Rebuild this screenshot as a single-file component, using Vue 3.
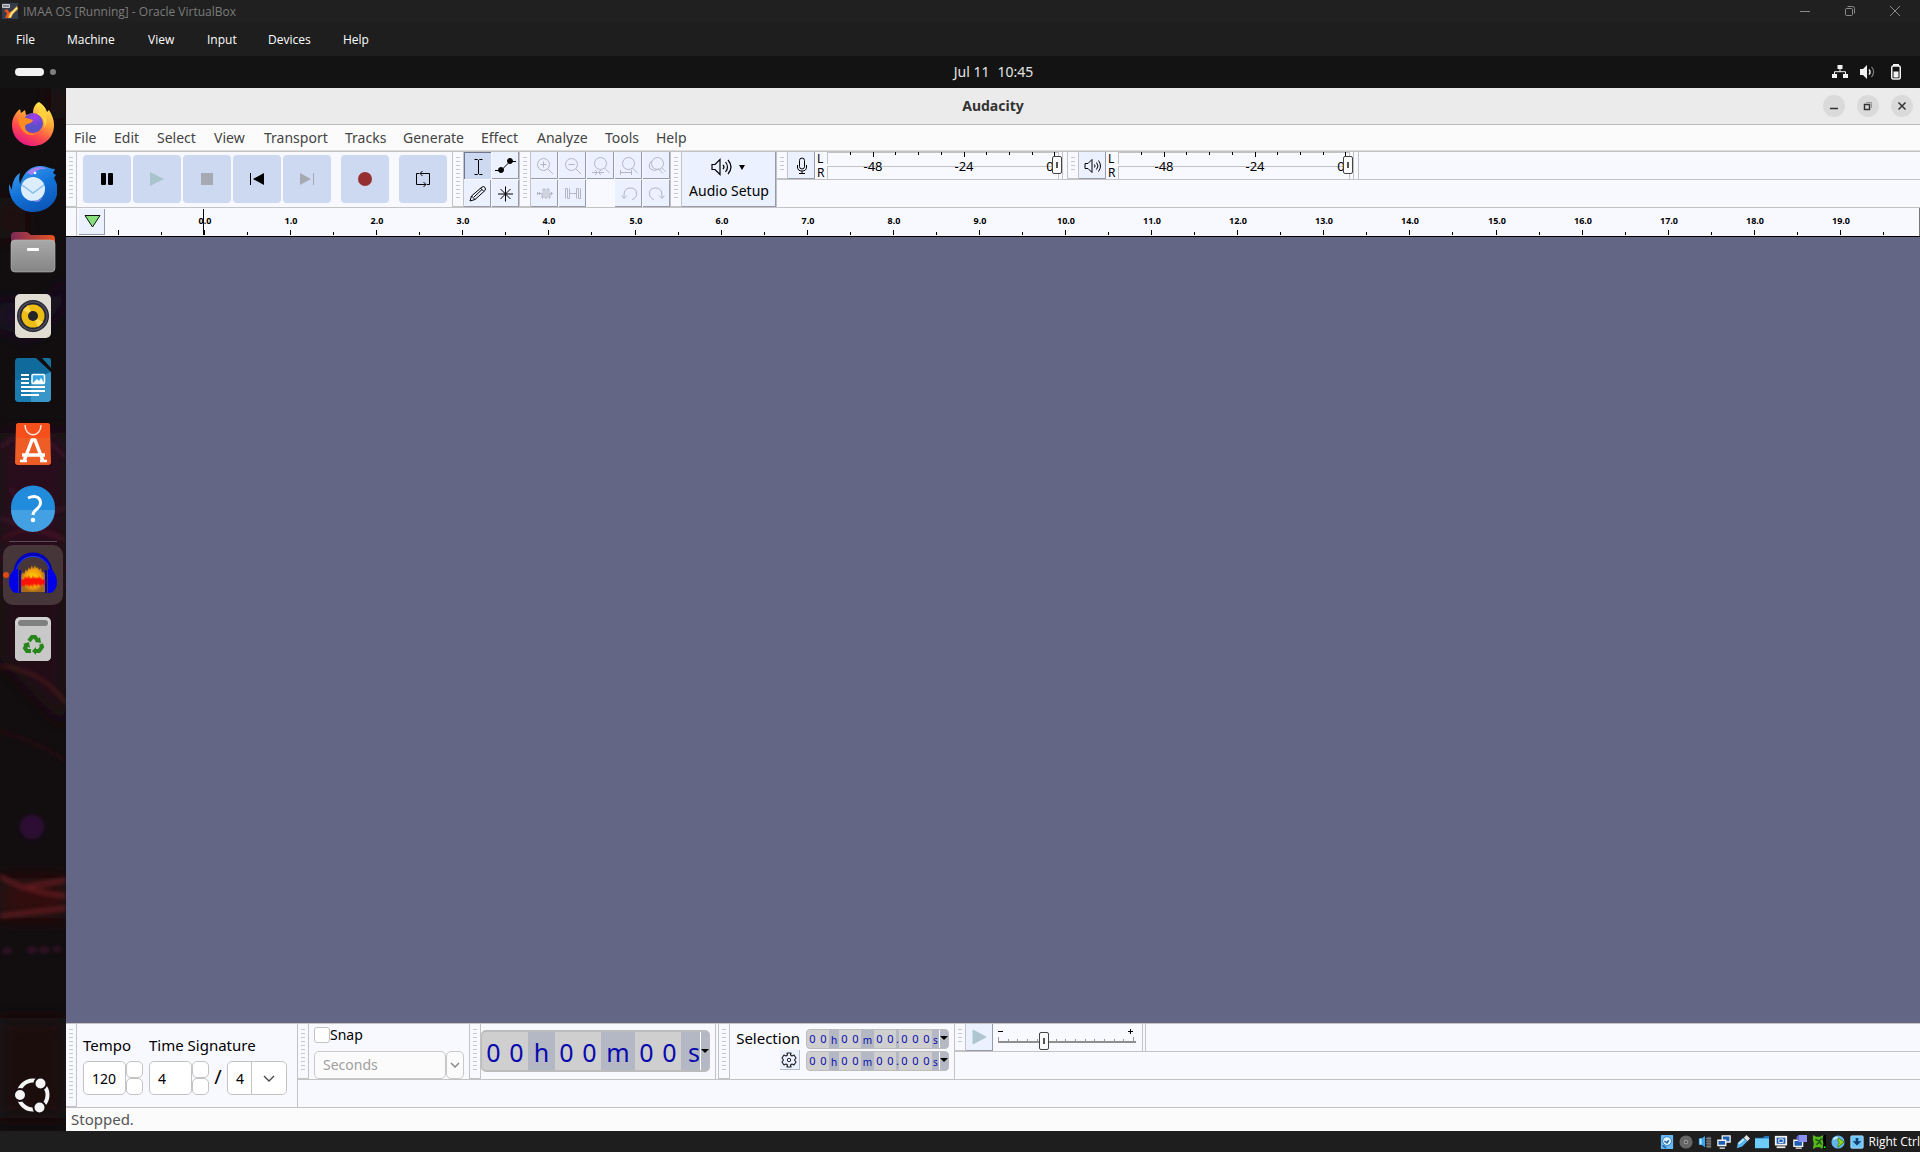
<script setup>
const vmMenu = ['File', 'Machine', 'View', 'Input', 'Devices', 'Help']
const appMenu = ['File', 'Edit', 'Select', 'View', 'Transport', 'Tracks', 'Generate', 'Effect', 'Analyze', 'Tools', 'Help']

const pitch = 86.1
const zero = 99
const ticks = []
for (let i = -2; i <= 39; i++) {
  ticks.push({ x: Math.round(zero + (i * pitch) / 2), major: i % 2 === 0, label: i >= 0 && i % 2 === 0 ? (i / 2).toFixed(1) : '' })
}

const meterTicks = Array.from({ length: 10 }, (_, i) => ({ x: Math.round(24 + i * 22.7), long: i % 4 === 1 || i === 9 }))
const meters = ['Recording level', 'Playback level']

const bigTime = [['00', 'n'], ['h', 'u'], ['00', 'n'], ['m', 'w'], ['00', 'n'], ['s', 'e']]
const smallTime = [['00', 'n'], ['h', 'u'], ['00', 'n'], ['m', 'w'], ['00', 'n'], ['.', 'd'], ['000', 'n'], ['s', 'e']]
const speedTicks = Array.from({ length: 15 }, (_, i) => Math.round(1 + i * 9.64))
</script>

<template>
  <div class="screen">
    <header class="vm-title">
      <svg class="vm-logo" width="16" height="16" viewBox="0 0 16 16"><rect width="16" height="16" fill="#343b4c" /><path d="M2 8 5 6l3 4-2 5H3l2-5z" fill="#e8501e" /><path d="M6 15c1-5 2-6 5-8l4-4 1 3-5 5-2 4z" fill="#f7a92b" /><path d="M8 14c1-4 3-5 7-9" stroke="#ffe9a0" stroke-width="1.5" fill="none" /><rect x="0" y="1" width="8" height="4" rx="1" fill="#c9ccd0" /><path d="M1 3h2m1-1v2m2-2v2" stroke="#444" /></svg>
      <span>IMAA OS [Running] - Oracle VirtualBox</span>
      <div class="vm-controls">
        <button aria-label="Minimize"><svg width="12" height="12" viewBox="0 0 12 12"><path d="M1 6.500h10" /></svg></button>
        <button aria-label="Restore"><svg width="12" height="12" viewBox="0 0 12 12"><rect x="1.500" y="3.500" width="7" height="7" rx="1" /><path d="M3.500 1.500h5a2 2 0 0 1 2 2v5" /></svg></button>
        <button aria-label="Close"><svg width="12" height="12" viewBox="0 0 12 12"><path d="m1 1 10 10M11 1 1 11" /></svg></button>
      </div>
    </header>
    <nav class="vm-menu"><a v-for="m in vmMenu" :key="m" href="#">{{ m }}</a></nav>

    <div class="topbar">
      <div class="workspaces"><i class="pill"></i><i class="dot"></i></div>
      <div class="clock"><span>Jul 11</span><span>10:45</span></div>
      <div class="tray">
        <svg width="16" height="16" viewBox="0 0 16 16"><path d="M5.500 1h5v4h-5zM0 10h5v4H0zM11 10h5v4h-5z" fill="#f2f2f2" /><path d="M8 5v3M2.500 10V7.700h11V10" stroke="#f2f2f2" fill="none" /></svg>
        <svg width="16" height="16" viewBox="0 0 16 16"><path d="M0 5h3l4-4v14l-4-4H0z" fill="#f2f2f2" /><path d="M9 5.500a3.500 3.500 0 0 1 0 5" stroke="#f2f2f2" stroke-width="1.500" fill="none" /><path d="M11.500 3a7 7 0 0 1 0 10" stroke="#777" stroke-width="1.300" fill="none" /></svg>
        <svg width="16" height="16" viewBox="0 0 16 16"><rect x="3.750" y="2" width="8.500" height="13" rx="1.500" stroke="#f2f2f2" stroke-width="1.500" fill="none" /><path d="M5 0h6v2H5zM5.500 7.500h5v6h-5z" fill="#f2f2f2" /></svg>
      </div>
    </div>

    <div class="desktop">
      <aside class="dock">
        <svg class="wall" viewBox="0 0 66 1043" preserveAspectRatio="none">
          <defs>
            <filter id="soft" x="-50%" y="-50%" width="200%" height="200%"><feGaussianBlur stdDeviation="2" /></filter>
            <filter id="haze" x="-50%" y="-50%" width="200%" height="200%"><feGaussianBlur stdDeviation="9" /></filter>
          </defs>
          <rect width="66" height="1043" fill="#120e10" />
          <g filter="url(#haze)">
            <path d="M0 110h25v40H0zM50 0h16v30H50z" fill="#200d11" />
            <path d="M0 210 40 225 66 190v25L30 250 0 240z" fill="#1e0f2a" />
            <path d="M0 345h66v165H0z" fill="#2b0c1a" />
            <path d="M0 500h66v140L0 570z" fill="#220d12" />
            <path d="M0 790h66v40H0z" fill="#32100f" />
            <path d="M0 930h66v100H0z" fill="#1c0d10" />
          </g>
          <g filter="url(#soft)" fill="none" stroke-width="2" opacity=".75">
            <path d="M0 360q30-30 66 10M10 400q20 30 56 20M0 430 66 452" stroke="#551b3a" />
            <path d="M0 452q30-20 66 0M0 470q40 25 66 8M0 495q40-12 66 5" stroke="#5b1723" />
            <path d="M0 578q45 5 66 38" stroke="#71261f" />
            <path d="M0 643q40 12 66 30" stroke="#3a1217" />
            <path d="M0 788q25 16 66 20M20 800l46-8M0 828l66-8" stroke="#6b1f22" stroke-width="5" />
            <path d="M3 863h8M28 862h8M40 862h8M54 861h6" stroke="#4d1838" stroke-width="5" />
          </g>
          <circle cx="32" cy="739" r="12" fill="#2f1034" filter="url(#soft)" />
        </svg>
        <button class="slot" aria-label="Firefox"><svg width="48" height="48" viewBox="0 0 48 48">
          <defs><linearGradient id="ff" x1=".8" y1="0" x2=".3" y2="1"><stop offset="0" stop-color="#fff44f" /><stop offset=".4" stop-color="#ffa436" /><stop offset=".7" stop-color="#ff4a4c" /><stop offset="1" stop-color="#e31587" /></linearGradient><radialGradient id="fp" cx=".6" cy=".2"><stop offset="0" stop-color="#a93cf0" /><stop offset="1" stop-color="#5b50c8" /></radialGradient></defs>
          <path d="M30 2c5 3 7 7 8 10l2-2c3 5 5 9 5 15 0 12-9 21-21 21S3 37 3 25c0-6 3-12 8-16l1 4 4-3 1 5 7-2c0-5 2-9 6-11z" fill="url(#ff)" />
          <circle cx="24" cy="23" r="10" fill="url(#fp)" /><path d="M9 18c5-2 9 0 15 2-1 4-6 3-8 6 0 7 7 9 13 7-10 6-19-2-20-15z" fill="#ff8b22" /><path d="M28 14c5 2 9 8 7 14 5-6 3-16-3-20z" fill="#ffd23d" />
        </svg></button>
        <button class="slot" aria-label="Thunderbird"><svg width="48" height="48" viewBox="0 0 48 48">
          <defs><linearGradient id="tb" x1=".2" y1="0" x2=".7" y2="1"><stop offset="0" stop-color="#3d9df0" /><stop offset=".5" stop-color="#1373d9" /><stop offset="1" stop-color="#0b55b5" /></linearGradient></defs>
          <path d="M11 9c-1 4-1 7 0 11C15 7 23 1 33 2c5 0 7 3 13 3l-2 4 3 2-2 3c10 16-2 34-20 34C11 48-1 37 0 20l3 6C3 18 6 12 11 9z" fill="url(#tb)" />
          <path d="M18 9c5-6 14-8 20-4-8-1-12 3-15 6z" fill="#a77ff0" /><circle cx="24" cy="25" r="12" fill="#dceefe" /><path d="m13 21 11 8 11-8" stroke="#8bbce8" stroke-width="1.500" fill="none" /><circle cx="26" cy="9" r="1.300" fill="#fff" /><path d="M22 36c6 2 9 0 12-3-3 5-6 6-12 3z" fill="#9b90f0" />
        </svg></button>
        <button class="slot" aria-label="Files"><svg width="48" height="48" viewBox="0 0 48 48">
          <defs><linearGradient id="fo"><stop offset="0" stop-color="#7d2a58" /><stop offset="1" stop-color="#e9541f" /></linearGradient><linearGradient id="fg" x2="0" y2="1"><stop offset="0" stop-color="#a9a9a9" /><stop offset="1" stop-color="#858585" /></linearGradient></defs>
          <path d="M2 8q0-4 4-4h12l4 3h20q4 0 4 4v14H2z" fill="url(#fo)" /><rect x="2" y="12" width="44" height="32" rx="4" fill="url(#fg)" stroke="#b8b8b8" stroke-width=".6" /><rect x="18" y="20" width="12" height="3" rx="1" fill="#fff" />
        </svg></button>
        <button class="slot" aria-label="Rhythmbox"><svg width="48" height="48" viewBox="0 0 48 48">
          <rect x="6" y="2" width="36" height="44" rx="5" fill="#e2ddd2" /><circle cx="24" cy="24" r="16" fill="#25252f" /><circle cx="24" cy="24" r="14" fill="none" stroke="#4b4c5c" stroke-width="1.500" /><circle cx="24" cy="24" r="11.500" fill="#edbd16" /><path d="m24 24-10-6 5-5zM24 24l10 6-5 5z" fill="#ffd84d" /><circle cx="24" cy="24" r="5" fill="#25252a" />
        </svg></button>
        <button class="slot" aria-label="LibreOffice Writer"><svg width="48" height="48" viewBox="0 0 48 48">
          <path d="M9 2h18l15 14v26q0 4-4 4H10q-4 0-4-4V6q0-4 3-4z" fill="#116a9c" /><path d="m42 16-20 8v22h16q4 0 4-4z" fill="#3996c8" /><path d="M6 24h16v22H10q-4 0-4-4z" fill="#1b7caf" /><path d="M33 2h7q2 0 2 2v8z" fill="#16719f" /><path d="M12 19h8M12 23h8M12 27h8M12 31h24M12 35h24M12 39h18" stroke="#fff" stroke-width="2" /><rect x="23" y="18.500" width="12.500" height="9" rx="1" fill="#38a6e2" stroke="#fff" stroke-width="1.500" /><path d="m24 27 4-4 2 2 2-3 3 5z" fill="#fff" />
        </svg></button>
        <button class="slot" aria-label="App Center"><svg width="48" height="48" viewBox="0 0 48 48">
          <path d="M10 3h28q3 0 3 3l1 36q0 3-3 3H9q-3 0-3-3L7 6q0-3 3-3z" fill="#ee5d25" /><path d="M10 3h28q3 0 3 3v12H7V6q0-3 3-3z" fill="#f5501c" /><path d="M16 5c0 13 16 13 16 0" stroke="#ffe5da" stroke-width="1.500" fill="none" /><path d="m15 41 8-21h3l8 21M13 35h23" stroke="#fff" stroke-width="3.500" fill="none" stroke-linejoin="round" /><path d="M11 41h7M31 41h7" stroke="#fff" stroke-width="2.500" />
        </svg></button>
        <button class="slot" aria-label="Help"><svg width="48" height="48" viewBox="0 0 48 48">
          <circle cx="24" cy="23.500" r="22" fill="#218bdc" /><path d="M2 26h44a22 22 0 0 1-44 0z" fill="#43a0e3" /><path d="M19 14c9-4 14 1 12 7-1 4-7 5-7 10" stroke="#fff" stroke-width="3" fill="none" /><circle cx="24" cy="36" r="2.300" fill="#fff" />
        </svg></button>
        <hr />
        <button class="slot active" aria-label="Audacity"><svg width="48" height="48" viewBox="0 0 48 48">
          <defs><radialGradient id="au"><stop offset="0" stop-color="#ffdf00" /><stop offset=".7" stop-color="#f09a10" /><stop offset="1" stop-color="#a86a18" /></radialGradient></defs>
          <path d="M12 41V24l2-3 1 2 2-5 1 3 2-5 1 3 2-5 1 4 2-4 1 3 2-1 1 3 2-2 1 4 2 0 1 3V41z" fill="url(#au)" /><path d="M12 29l2-1 1 1 1-4 1 3 1-3 1 3 1-4 1 4 1-2 1 2 1-4 1 4 1-3 1 3 1-2 1 2 1-3 1 3 1-2 1 3 2-1 1 1V33l-1 1-2-1-1 3-1-3-1 2-1-3-1 4-1-3-1 2-1-3-1 5-1-4-1 3-1-3-1 4-1-4-1 3-1-3-2 3-1-2-2 2z" fill="#fb1208" /><path d="M6 25C5-4 43-4 42 25" stroke="#0000bd" stroke-width="3.500" fill="none" /><path d="M7 22C8 0 40 0 41 22" stroke="#1c3aff" fill="none" /><path d="M8 18c-4 0-8 6-8 13 0 6 3 11 8 11h1V18zM40 18c4 0 8 6 8 13 0 6-3 11-8 11h-1V18z" fill="#0000e8" /><path d="M11 19v23M37 19v23" stroke="#0000bd" stroke-width="2" />
        </svg></button>
        <button class="slot" aria-label="Trash"><svg width="48" height="48" viewBox="0 0 48 48">
          <rect x="6" y="2" width="36" height="44" rx="5" fill="#d2d2d2" /><path d="M6 10h36v31q0 5-5 5H11q-5 0-5-5z" fill="#c8c8c8" /><rect x="9" y="5" width="30" height="6" rx="3" fill="#808080" />
          <g fill="none" stroke="#27851c" stroke-width="4"><path d="m20 26 3-4h3l3 4" /><path d="m32 29 1 3-3 4h-4" /><path d="M22 36h-4l-2-3 2-4" /></g><path d="m31 22 1 6-6-1zM27 32v8l-4-4zM14 29l6-2 1 6z" fill="#27851c" />
        </svg></button>
        <button class="slot apps" aria-label="Show Apps"><svg width="40" height="40" viewBox="0 0 40 40">
          <circle cx="20" cy="20" r="14.500" fill="none" stroke="#f4f4f4" stroke-width="4" /><g fill="#f4f4f4" stroke="#170e11" stroke-width="2"><circle cx="7" cy="20" r="6" /><circle cx="27.500" cy="8.500" r="6" /><circle cx="26.500" cy="32.500" r="6" /></g>
        </svg></button>
      </aside>

      <main class="window">
        <header class="app-title">
          <h1>Audacity</h1>
          <div class="app-controls">
            <button aria-label="Minimize"><svg width="10" height="10" viewBox="0 0 10 10"><path d="M1 7.500h8" /></svg></button>
            <button aria-label="Restore"><svg width="10" height="10" viewBox="0 0 10 10"><path d="M1.500 3.500h5v5h-5z" /><path class="faint" d="M3 1.500h5.500V7" /></svg></button>
            <button aria-label="Close"><svg width="10" height="10" viewBox="0 0 10 10"><path d="m1.500 1.500 7 7m0-7-7 7" /></svg></button>
          </div>
        </header>
        <nav class="app-menu"><a v-for="m in appMenu" :key="m" href="#">{{ m }}</a></nav>

        <section class="toolbars">
          <div class="group">
            <div class="grip"></div>
            <div class="transport">
              <button aria-label="Pause"><svg viewBox="0 0 48 48"><rect x="18" y="18" width="5" height="12" rx="1" /><rect x="25" y="18" width="5" height="12" rx="1" /></svg></button>
              <button aria-label="Play"><svg viewBox="0 0 48 48"><path d="m17 17 14 7-14 7z" fill="#a9c3cd" /></svg></button>
              <button aria-label="Stop"><svg viewBox="0 0 48 48"><path d="M18 18h12v12H18z" fill="#a5a9b2" /></svg></button>
              <button aria-label="Skip to Start"><svg viewBox="0 0 48 48"><path d="M17 18h1v12h-1zM31 18v12l-11-6z" /></svg></button>
              <button aria-label="Skip to End"><svg viewBox="0 0 48 48"><path d="M30 18h1v12h-1zM17 18v12l11-6z" fill="#a5a9b2" /></svg></button>
              <button class="apart" aria-label="Record"><svg viewBox="0 0 48 48"><circle cx="24" cy="24" r="7" fill="#962f31" /></svg></button>
              <button class="apart" aria-label="Loop"><svg viewBox="0 0 48 48"><path d="M20 18.500h-2.500v11H27M28 29.500h2.500v-11H21M23.500 16 21 18.500l2.500 2.500M24.500 27l2.500 2.500-2.500 2.500" fill="none" stroke="#000" /></svg></button>
            </div>
          </div>

          <div class="group">
            <div class="grip"></div>
            <div class="tools">
              <button class="pressed" aria-label="Selection Tool"><svg viewBox="0 0 27 27"><path d="M10.500 7.500h3l1 1 1-1h3M10.500 22.500h3l1-1 1 1h3M14.500 8v14" /></svg></button>
              <button aria-label="Envelope Tool"><svg viewBox="0 0 27 27"><path d="M3 18.500h6l9-9h6" /><circle cx="9" cy="18" r="2.500" fill="#000" /><circle cx="18" cy="9" r="2.500" fill="#000" /></svg></button>
              <button aria-label="Draw Tool"><svg viewBox="0 0 27 27"><path d="m6 21 1.500-5L18 7q2-1 3 .5t0 3L11 19.500zM16.500 8l3 3M7.500 16l3.500 3.500M10 17l8-7.500" /></svg></button>
              <button aria-label="Multi-Tool"><svg viewBox="0 0 27 27"><path d="M13.500 6.500v15M6 14h15M8.500 9l10 10M18.500 9l-10 10" /></svg></button>
            </div>
          </div>

          <div class="group">
            <div class="grip"></div>
            <div class="edits">
              <button aria-label="Zoom In"><svg viewBox="0 0 27 27"><circle cx="12.500" cy="12.500" r="6" /><path d="m17 17 5 5M9.500 12.500h6M12.500 9.500v6" /></svg></button>
              <button aria-label="Zoom Out"><svg viewBox="0 0 27 27"><circle cx="12.500" cy="12.500" r="6" /><path d="m17 17 5 5M9.500 12.500h6" /></svg></button>
              <button aria-label="Fit Selection"><svg viewBox="0 0 27 27"><circle cx="13.500" cy="11.500" r="6" /><path d="m17.500 16 5 5M5 20.500h5m2 0h5M8 18l2.500 2.500L8 23m6-5-2.500 2.500L14 23" /></svg></button>
              <button aria-label="Fit Project"><svg viewBox="0 0 27 27"><circle cx="13.500" cy="11.500" r="6" /><path d="m17.500 16 5 5M5.500 20.500h11M5.500 18v5m11-5v5" /></svg></button>
              <button aria-label="Zoom Toggle"><svg viewBox="0 0 27 27"><circle cx="14.500" cy="11.500" r="6" /><path d="m18.500 15.500 4 4M8.500 9q-4 4-1 8 4 3 8 0l4.500 4.500" /></svg></button>
              <button aria-label="Trim Audio"><svg viewBox="0 0 27 27"><path d="M6.500 12v3M8.500 12v3M6 13.500h5V18h1V9h2v9h2V9h2v9h1v-4.500h3M20.500 12v3" /></svg></button>
              <button aria-label="Silence Audio"><svg viewBox="0 0 27 27"><path d="M6.500 18.500V8.500h2v10h2v-10M10.500 13.500h7M17.500 18.500V8.500h2v10h2v-10" /></svg></button>
              <span></span>
              <button aria-label="Undo"><svg viewBox="0 0 27 27"><path d="M9 18v-3q0-7 6.500-7t6 6q0 4-4.500 5.500M6.500 15.500 9 18.500l3-3" /></svg></button>
              <button aria-label="Redo"><svg viewBox="0 0 27 27"><path d="M19 18v-3q0-7-6.500-7t-6 6q0 4 4.500 5.500M16 15.500l3 3 2.500-3" /></svg></button>
            </div>
          </div>

          <div class="group">
            <div class="grip"></div>
            <button class="audio-setup">
              <svg width="36" height="18" viewBox="0 0 36 18"><path d="M1 6.500h3l5-5v15l-5-5H1zM12 7q2 2 0 4m2.500-7q4 5 0 10M17 2q6 7 0 14" fill="none" stroke="#000" stroke-width="1.200" /><path d="M28 7h6l-3 5z" /></svg>
              <span>Audio Setup</span>
            </button>
          </div>

          <div class="meters-area">
            <div class="meters">
              <div v-for="(name, i) in meters" :key="name" class="group meter-group">
                <div class="grip"></div>
                <button class="tool" :aria-label="name">
                  <svg v-if="i === 0" viewBox="0 0 27 27"><rect x="11.500" y="6" width="5" height="11" rx="2.500" /><path d="M9.500 13v2q0 4 4.500 4t4.500-4v-2M14 19v2.500m-3 0h6" /></svg>
                  <svg v-else viewBox="0 0 27 27"><path d="M6 11.500h3l4-4v13l-4-4H6zM15.500 12.500q1 1.500 0 3m2-5q3 3.500 0 7m2-9q4 5.500 0 11" /></svg>
                </button>
                <div class="lr"><span>L</span><span>R</span></div>
                <div class="meter">
                  <svg width="238" height="27" viewBox="0 0 238 27">
                    <path d="M0 .5h232M.5 0v12M.5 15v12M0 14.500h232M231.500 0v27M235.500 0v27" stroke="#c3c3c3" fill="none" />
                    <path v-for="t in meterTicks" :key="t.x" :d="`M${t.x - 0.5} 0v${t.long ? 5 : 3}`" stroke="#000" />
                    <text x="46" y="19" text-anchor="middle">-48</text><text x="137" y="19" text-anchor="middle">-24</text><text x="223" y="19" text-anchor="middle">0</text>
                  </svg>
                  <input type="range" value="100" :aria-label="name" />
                </div>
              </div>
            </div>
          </div>
        </section>

        <section class="ruler">
          <div class="ruler-pad"></div>
          <button class="pin" aria-label="Playhead options"><svg width="26" height="26" viewBox="0 0 26 26"><path d="M6 6.500h15L13.500 18z" fill="#86e17c" stroke="#111" /></svg></button>
          <svg class="scale" width="100%" height="27">
            <g v-for="t in ticks" :key="t.x">
              <rect :x="t.x" :y="t.major ? 22 : 24" width="1" :height="t.major ? 5 : 3" />
              <text v-if="t.label" :x="t.x + 1" y="16" text-anchor="middle">{{ t.label }}</text>
            </g>
            <rect x="98" y="1" width="1" height="26" />
          </svg>
        </section>

        <section class="tracks"></section>

        <section class="bottom">
          <div class="group">
            <div class="grip"></div>
            <div class="signature">
              <label for="tempo">Tempo</label><label class="wide" for="upper">Time Signature</label>
              <div class="spin"><input id="tempo" type="text" value="120" /><span class="steps"><button aria-label="Increase tempo"></button><button aria-label="Decrease tempo"></button></span></div>
              <div class="spin"><input id="upper" type="text" value="4" /><span class="steps"><button aria-label="Increase beats"></button><button aria-label="Decrease beats"></button></span></div>
              <span class="slash">/</span>
              <div class="lower"><select aria-label="Note value"><option>4</option></select><i><svg width="12" height="7" viewBox="0 0 12 7"><path d="m1 1 5 5 5-5" fill="none" stroke="#444" stroke-width="1.300" /></svg></i></div>
            </div>
          </div>
          <div class="bottom-rest">
            <div class="bottom-row">
              <div class="group snap-group">
                <div class="grip"></div>
                <div class="snap">
                  <label><input type="checkbox" />Snap</label>
                  <div class="snap-unit"><select disabled aria-label="Snap unit"><option>Seconds</option></select><span><svg width="10" height="6" viewBox="0 0 10 6"><path d="m1 1 4 4 4-4" fill="none" stroke="#8a8a8a" stroke-width="1.500" /></svg></span></div>
                </div>
              </div>
              <div class="group time-group">
                <div class="grip"></div>
                <div class="time big">
                  <span v-for="(s, i) in bigTime" :key="i" :class="s[1]"><b v-for="(c, j) in s[0]" :key="j">{{ c }}</b></span>
                  <button aria-label="Time format"></button>
                </div>
              </div>
              <div class="group sel-group">
                <div class="grip"></div>
                <div class="sel-label"><span>Selection</span><button aria-label="Selection options"><svg width="18" height="18" viewBox="0 0 18 18"><path d="m7 2 .5 2L6 5l-2-1-2 3 1.500 2L2 11l2 3 2-1 1.500 1L7 16h4l-.5-2 1.500-1 2 1 2-3-1.500-2L16 7l-2-3-2 1-1.500-1 .5-2z" fill="none" stroke="#222" stroke-width="1.200" stroke-linejoin="round" /><circle cx="9" cy="9" r="1.700" fill="none" stroke="#222" /></svg></button></div>
                <div class="sel-times">
                  <div v-for="n in 2" :key="n" class="time small">
                    <span v-for="(s, i) in smallTime" :key="i" :class="s[1]"><b v-for="(c, j) in s[0]" :key="j">{{ c }}</b></span>
                    <button aria-label="Selection format"></button>
                  </div>
                </div>
              </div>
              <div class="speed-area">
                <div class="group speed-group">
                  <div class="grip"></div>
                  <button class="tool" aria-label="Play at Speed"><svg viewBox="0 0 27 27"><path d="m7 6 13 7-13 7z" fill="#afc6d0" stroke="#afc6d0" /></svg></button>
                  <div class="speed">
                    <svg width="138" height="26" viewBox="0 0 138 26"><path d="M0 18h138" stroke="#8f8f8f" stroke-width="2" /><path v-for="(t, i) in speedTicks" :key="t" :d="`M${t - 0.5} ${i % 14 ? 15 : 13}V18`" stroke="#999" /><path d="M0 7.500h5M130 7.500h5M132.500 5v5" stroke="#000" /></svg>
                    <input type="range" value="32" aria-label="Playback speed" />
                  </div>
                </div>
              </div>
            </div>
          </div>
        </section>
        <footer class="status">Stopped.</footer>
      </main>
    </div>

    <footer class="vm-status">
      <svg viewBox="0 0 16 16"><rect x="1" width="14" height="16" rx="1" fill="#68b8f5" /><circle cx="8" cy="7" r="5" fill="#e8f6ff" stroke="#2277bd" /><path d="m5 7 3 2 2-3M7 15l-4-3" stroke="#2468a8" stroke-width="2" fill="none" /></svg>
      <svg viewBox="0 0 16 16"><circle cx="8" cy="8" r="7.500" fill="#666" /><circle cx="8" cy="8" r="2.500" fill="#999" /><circle cx="8" cy="8" r="1" fill="#222" /></svg>
      <svg viewBox="0 0 16 16"><path d="M1 4h3l4-3v13l-4-3H1z" fill="#38a8f2" /><path d="M3 4v7" stroke="#b6e6ff" stroke-width="2" /><path d="M10 2h5v13h-5z" fill="#555" /><path d="M9 4h6M9 7h6M9 10h6M9 13h6" stroke="#888" /></svg>
      <svg viewBox="0 0 16 16"><path d="M6 1h9v7H6z" fill="#1c5fb5" stroke="#f2f2f2" stroke-width="1.500" /><path d="M1 6h9v6H1zM3 15h6" fill="#1c5fb5" stroke="#f2f2f2" stroke-width="1.500" /></svg>
      <svg viewBox="0 0 16 16"><path d="m1 15 1-6 6-6 5 4-6 6z" fill="#57b7f3" /><path d="m9 3 3-3 4 4-3 3z" fill="#e2e2e2" /><path d="m3 10 6-5" stroke="#c3ecff" stroke-width="2" /></svg>
      <svg viewBox="0 0 16 16"><path d="M0 3h9l2-2h5v14H0z" fill="#1f75bd" /><path d="M0 4h16v11H0z" fill="#6dcdf8" /></svg>
      <svg viewBox="0 0 16 16"><rect x="1" y="1" width="14" height="11" fill="#f2f2f2" /><path d="M3 3h10v7H3z" fill="#1c5fb5" /><path d="M5.500 4.500h5v4h-5z" fill="none" stroke="#fff" /><path d="M3 14h10" stroke="#eee" stroke-width="2" /></svg>
      <svg viewBox="0 0 16 16"><path d="M1 6h10v7H1zM3 15h7" fill="#1c5fb5" stroke="#f2f2f2" stroke-width="1.500" /><rect x="6" width="10" height="8" fill="#8a90ef" /><path d="m4 2 3-2v7L4 5z" fill="#6668cf" /></svg>
      <svg viewBox="0 0 16 16"><path d="M12 0h4v16h-4z" /><path d="m1 0 4 2h4l4-2-1 5 1 4-1 7-3-2H5l-4 2 1-6-1-5z" fill="#56b61f" /><path d="m4 5 4 2 3-3M5 11l4-3 2 3" stroke="#17520d" stroke-width="1.500" fill="none" /><path d="M14.500 13v2" stroke="#0f0" stroke-width="2" /></svg>
      <svg viewBox="0 0 16 16"><circle cx="8" cy="8" r="7.500" fill="#64b5ee" /><path d="M3 5q4-4 6 0" stroke="#d7f2ff" stroke-width="2" fill="none" /><path d="m8 3 7 5-7 6v-3q3-2 0-4z" fill="#96d821" stroke="#42820d" /></svg>
      <svg viewBox="0 0 16 16"><rect x="1" y="1" width="14" height="14" rx="1" fill="#6bc4f6" stroke="#b7e5ff" /><path d="M6.500 3.500h3V7H13l-5 5-5-5h3.500z" fill="#153e72" /></svg>
      <span>Right Ctrl</span>
    </footer>
  </div>
</template>

<style>
html, body { margin: 0; background: #1e1e1e; overflow: hidden; }
</style>

<style scoped>
* { box-sizing: border-box; }
.screen { display: flex; flex-direction: column; min-height: 100vh; font-family: "Noto Sans", "Open Sans", sans-serif; font-size: 14px; color: #000; }
button, input, select { font: inherit; color: inherit; padding: 0; margin: 0; border: 0; background: none; }
svg { display: block; flex: none; }
a { color: inherit; text-decoration: none; }

.vm-title { height: 22px; display: flex; align-items: center; gap: 5px; padding: 0 19px 0 2px; background: #202020; color: #7c7c7c; font-family: "Open Sans", "Noto Sans", sans-serif; font-size: 12px; white-space: nowrap; }
.vm-controls { margin-left: auto; display: flex; gap: 33px; }
.vm-controls button { display: block; }
.vm-controls path, .vm-controls rect { fill: none; stroke: #8a8a8a; }
.vm-menu { height: 34px; display: grid; grid-template-columns: 51px 81px 59px 61px 75px 60px; padding: 0 0 0 16px; align-items: center; background: #1e1e1e; color: #fff; font-family: "Open Sans", "Noto Sans", sans-serif; font-size: 12px; }

.topbar { height: 32px; display: grid; grid-template-columns: 1fr auto 1fr; align-items: center; background: #131313; color: #e4e4e4; padding: 0 16px 0 15px; }
.workspaces { display: flex; align-items: center; gap: 6px; }
.pill { width: 29px; height: 8px; border-radius: 4px; background: #f2f2f2; }
.dot { width: 6px; height: 6px; border-radius: 3px; background: #808080; }
.clock { display: flex; gap: 8px; padding: 0 0 2px 68px; }
.tray { display: flex; justify-content: flex-end; gap: 12px; }

.desktop { flex: 1; display: flex; }
.dock { position: relative; width: 66px; flex: none; display: flex; flex-direction: column; align-items: center; padding: 4px 0; overflow: hidden; background: #120e10; }
.wall { position: absolute; left: 0; top: 0; width: 100%; height: 100%; }
.slot { position: relative; width: 60px; height: 60px; margin: 2px 0; flex: none; display: flex; align-items: center; justify-content: center; border-radius: 10px; }
.dock hr { position: relative; width: 48px; height: 1px; margin: 1px 0; border: 0; background: #5a4c50; flex: none; }
.active { background: #46363a; }
.active::before { content: ""; position: absolute; left: 0; top: 27px; width: 6px; height: 6px; border-radius: 3px; background: #dd4a16; }
.apps { margin-top: auto; margin-bottom: 2px; }

.window { flex: 1; min-width: 0; display: flex; flex-direction: column; background: #f8f9ff; }
.app-title { height: 37px; display: grid; grid-template-columns: 1fr auto 1fr; align-items: center; background: #ebebeb; border-bottom: 1px solid #bdbdbd; color: #333; padding: 0 7px; }
.app-title h1 { grid-column: 2; margin: 0; font-size: 14px; line-height: 20px; font-weight: 700; }
.app-controls { display: flex; justify-content: flex-end; gap: 12px; }
.app-controls button { width: 22px; height: 22px; border-radius: 11px; background: #dadada; display: flex; align-items: center; justify-content: center; }
.app-controls path { fill: none; stroke: #333; stroke-width: 1.5; }
.app-controls .faint { stroke: #999; stroke-width: 1; }
.app-menu { height: 26px; display: grid; grid-template-columns: 40px 43px 57px 50px 81px 58px 78px 56px 68px 51px 50px; align-items: center; padding-left: 8px; background: #fbfbfb; border-bottom: 1px solid #dedede; color: #444; }

.toolbars { height: 57px; display: flex; border-top: 1px solid #c3c3c3; border-bottom: 1px solid #c3c3c3; }
.group { display: flex; border-right: 1px solid #c3c3c3; flex: none; }
.grip { width: 11px; flex: none; border-right: 1px solid #c3c3c3; border-bottom: 1px solid #c3c3c3; padding: 5px 3px; background: repeating-linear-gradient(#c8c8cc 0 1px, transparent 1px 4px) content-box; }
.transport { display: flex; gap: 2px; padding: 3px 5px 0 6px; }
.transport button { width: 48px; height: 48px; border-radius: 4px; background: #cdd9f0; }
.transport .apart { margin-left: 8px; }
.tools, .edits { display: grid; gap: 1px; grid-template-columns: repeat(2, 27px); grid-auto-rows: 27px; }
.edits { grid-template-columns: repeat(5, 27px); }
.tools button, .edits button, .tool { width: 27px; height: 27px; background: #ebf1ff; box-shadow: inset -1px -1px #959bad; }
.tools svg, .edits svg, .tool svg { width: 27px; height: 27px; fill: none; stroke: #000; }
.edits svg { stroke: #b2b6c2; }
.tools .pressed { background: #cdd9f0; box-shadow: inset 1px 1px #6f7890; }
.audio-setup { width: 94px; background: #ebf1ff; box-shadow: inset -1px -1px #959bad; display: flex; flex-direction: column; align-items: center; justify-content: center; gap: 5px; line-height: 20px; white-space: nowrap; }
.meters-area { flex: 1; }
.meters { height: 28px; display: flex; border-bottom: 1px solid #c3c3c3; }
.meter-group { width: 291px; }
.lr { width: 12px; padding-left: 2px; display: flex; flex-direction: column; font-size: 12px; line-height: 14px; }
.meter { position: relative; }
.meter text { font-size: 13px; }
.meter input { position: absolute; left: 0; top: 4px; width: 235px; height: 18px; appearance: none; }
input[type="range"]::-webkit-slider-thumb { appearance: none; width: 10px; height: 18px; border: 1px solid #444; border-radius: 2px; background: linear-gradient(#555, #555) center / 2px 6px no-repeat #fafafa; }

.ruler { height: 29px; display: flex; border-bottom: 1px solid #000; box-shadow: inset -1px 0 #777; }
.ruler-pad { width: 11px; flex: none; border-right: 1px solid #c3c3c3; }
.pin { width: 26px; flex: none; margin: 1px 0 0 2px; height: 26px; background: #ebf1ff; box-shadow: inset -1px -1px #959bad; }
.scale { flex: 1; min-width: 0; pointer-events: none; }
.scale text { font-size: 9px; font-weight: 700; }

.tracks { flex: 1; background: #636684; }
.bottom { height: 85px; display: flex; border-top: 1px solid #c3c3c3; border-bottom: 1px solid #c3c3c3; }
.signature { width: 220px; padding: 11px 0 0 6px; display: grid; grid-template-columns: 60px 60px 18px 60px; column-gap: 6px; grid-template-rows: 26px 34px; }
.signature label { line-height: 20px; font-size: 15px; }
.signature .wide { grid-column: span 3; white-space: nowrap; }
.spin { display: flex; }
.spin input { width: 43px; height: 34px; padding-left: 8px; border: 1px solid #c3c3c3; border-radius: 5px; background: #fff; }
.steps { display: flex; flex-direction: column; }
.steps button { width: 17px; height: 17px; border: 1px solid #c3c3c3; border-radius: 5px; background: #fff; }
.slash { font-size: 20px; line-height: 32px; text-align: center; margin-left: -12px; }
.lower { position: relative; margin-left: -12px; width: 60px; }
.lower select { appearance: none; width: 60px; height: 34px; padding-left: 8px; border: 1px solid #c3c3c3; border-radius: 5px; background: #fff; }
.lower i { position: absolute; left: 24px; top: 1px; width: 34px; height: 32px; border-left: 1px solid #c3c3c3; display: flex; align-items: center; justify-content: center; pointer-events: none; }
.bottom-rest { flex: 1; min-width: 0; }
.bottom-row { height: 56px; display: flex; border-bottom: 1px solid #c3c3c3; }
.snap-group { width: 172px; }
.snap { padding: 2px 0 0 5px; }
.snap label { display: flex; height: 18px; line-height: 18px; align-items: center; }
.snap input { appearance: none; width: 16px; height: 16px; border: 1px solid #c3c3c3; border-radius: 3px; background: #fff; }
.snap-unit { display: flex; margin-top: 7px; }
.snap-unit select { appearance: none; width: 132px; height: 28px; padding: 0 0 2px 8px; border: 1px solid #c9c9c9; border-radius: 5px; background: #fbfbfb; color: #a0a0a0; opacity: 1; }
.snap-unit span { width: 18px; border: 1px solid #c9c9c9; border-radius: 5px; background: #fbfbfb; display: flex; align-items: center; justify-content: center; }
.time-group { width: 249px; box-shadow: inset -2px 0 #f8f9ff, inset -3px 0 #c3c3c3; }
.time { display: flex; border: 1px solid #bcbcbc; background: #b3b8c4; color: #0a0aae; overflow: hidden; }
.time span { display: flex; justify-content: center; }
.time b { font-weight: 400; text-align: center; }
.time .n { background: #cfcfcf; }
.time button { position: relative; border-left: 1px solid #fff; }
.time button::before { content: ""; position: absolute; left: 0; border: 4px solid transparent; border-top-color: #000; border-bottom: 0; }
.big { width: 229px; height: 42px; margin: 6px 0 0; border-width: 2px 1px; border-radius: 5px; font-size: 25px; line-height: 41px; }
.big .n b { width: 23px; }
.big .u { width: 27px; }
.big .w { width: 34px; }
.big .e { width: 19px; justify-content: flex-end; }
.big button { width: 9px; }
.big button::before { top: 17px; }
.sel-group { width: 236px; }
.sel-label { width: 70px; display: flex; flex-direction: column; align-items: flex-end; padding-top: 4px; line-height: 20px; font-size: 15px; }
.sel-label button { width: 20px; height: 20px; margin-top: 2px; background: #ebf1ff; border-right: 1px solid #b5bccb; border-bottom: 1px solid #b5bccb; }
.sel-times { padding: 5px 0 0 6px; display: flex; flex-direction: column; gap: 2px; }
.small { width: 143px; height: 20px; border-radius: 4px; font-size: 11px; line-height: 17px; }
.small .n b { width: 11px; }
.small .u { width: 10px; }
.small .w { width: 13px; }
.small .d { width: 3px; }
.small .e { width: 7px; }
.small .u, .small .w, .small .e { font-size: 10px; line-height: 21px; }
.small button { flex: 1; }
.small button::before { top: 6px; }
.speed-area { flex: 1; }
.speed-group { width: 100%; height: 28px; border-right: 0; border-bottom: 1px solid #c3c3c3; }
.speed { position: relative; width: 153px; padding-left: 5px; border-right: 1px solid #c3c3c3; box-shadow: inset -2px 0 #f8f9ff, inset -3px 0 #c3c3c3; }
.speed input { position: absolute; left: 5px; top: 8px; width: 138px; height: 18px; appearance: none; }
.status { height: 23px; padding-left: 5px; line-height: 23px; font-size: 15px; background: #fbfbfb; color: #555; }
.vm-status { height: 21px; display: flex; align-items: center; justify-content: flex-end; gap: 5px; background: #1e1e1e; color: #fff; font-family: "Open Sans", "Noto Sans", sans-serif; font-size: 12px; white-space: nowrap; }
.vm-status svg { width: 14px; height: 16px; }
</style>
